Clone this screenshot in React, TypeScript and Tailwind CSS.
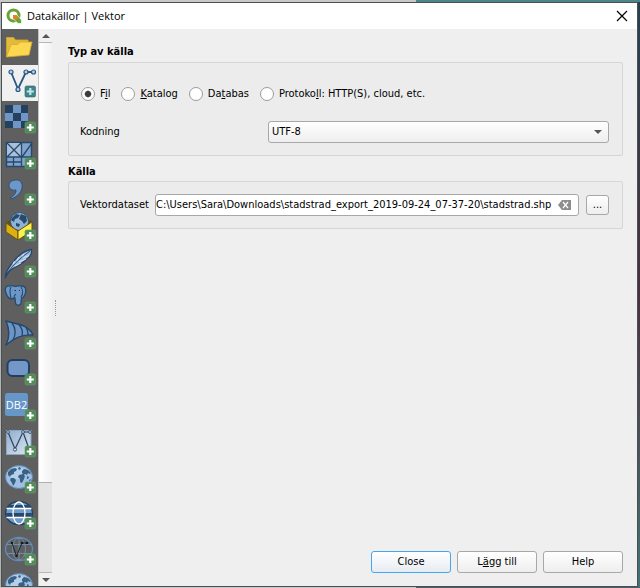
import type { ReactNode } from "react";
import { clsx } from "clsx";

function Badge({ teal = false }: { teal?: boolean }) {
  return (
    <g>
      <rect x="23" y="21" width="10.5" height="11" rx="1.5" fill={teal ? "#3f8487" : "#508c57"} stroke={teal ? "#2c6470" : "#6a9a6e"} strokeWidth="0.6" />
      <path d="M28.3 23v7M24.8 26.500h7" stroke={teal ? "#bfe6ea" : "#fff"} strokeWidth="2.2" />
    </g>
  );
}

function Globe() {
  return (
    <>
      <ellipse cx="17" cy="16" rx="13.500" ry="11.500" fill="#9fc0e3" stroke="#5b88b5" />
      <ellipse cx="15" cy="12" rx="9" ry="6" fill="#c3daf0" opacity="0.6" />
      <path
        d="M6 11l3-3 4-1 2 1-1 2-2 1v2l-3 1-1 2-2-2zM9 17l3 0 2 2-1 3-2 3-1-3-2-3zM16 7l2-1 1 2-2 1zM20 10l2-2 4 1 3 3-1 1-2-1-1 2-2-1-1 1-2-2zM17 14l4-1 2 2-1 3-2 4-2-1 0-3-2-2zM25 15l2 1-1 2-1 0zM27 19l2-1-1 3z"
        fill="#3a6083"
      />
    </>
  );
}

const sources: { name: string; icon: ReactNode }[] = [
  {
    name: "Bläddrare",
    icon: (
      <g stroke="#d6a92b" strokeWidth="0.8" strokeLinejoin="round">
        <path d="M4.500 27.500V8.500h7l2 2.500h12.500v4z" fill="#e3ba3c" />
        <path d="M4.500 28L9 15.500h7l2-2.500h12L27 26z" fill="#fbd850" />
      </g>
    ),
  },
  {
    name: "Vektor",
    icon: (
      <>
        <path d="M9 7l7 17L24 7h8" fill="none" stroke="#2b5780" strokeWidth="1.800" />
        <g fill="#b7d1ea" stroke="#2b5780" strokeWidth="1.200">
          <circle cx="9" cy="7" r="2" />
          <circle cx="24" cy="7" r="2" />
          <circle cx="31.500" cy="7" r="2" />
          <circle cx="16" cy="24.500" r="2" />
        </g>
        <Badge teal />
      </>
    ),
  },
  {
    name: "Raster",
    icon: (
      <>
        <rect x="3" y="4" width="23" height="23" fill="#25405f" />
        <path d="M11 4h8v8h7v8h-7v7h-8v-7H3v-8h8z" fill="#6e97c8" />
        <rect x="11" y="12" width="8" height="8" fill="#25405f" />
        <Badge />
      </>
    ),
  },
  {
    name: "Mesh",
    icon: (
      <>
        <rect x="4.500" y="5.500" width="25" height="24" fill="#7fa3cd" stroke="#29496b" strokeWidth="1.500" />
        <path d="M5 6h14v14H5z" fill="#a9c0dc" />
        <path d="M4 20h26M19.500 5v25M11.500 20v10M4 25h16M5 6l14 14M19 6L5 20M30 6L20 20" fill="none" stroke="#29496b" strokeWidth="1.300" />
        <Badge />
      </>
    ),
  },
  {
    name: "Avgränsad text",
    icon: (
      <>
        <path d="M13 7c5-1 8 3 7 8-1 5-5 9-11 11l-1-1c4-2 6-5 6-8-4 1-7-1-7-4.500C7 9.500 9.500 7.500 13 7z" fill="#6d97c7" stroke="#294f7a" strokeWidth="1" />
        <Badge />
      </>
    ),
  },
  {
    name: "GeoPackage",
    icon: (
      <>
        <path d="M4 13l13-5 13 4-14 9z" fill="#675000" />
        <circle cx="17.500" cy="12.500" r="9" fill="#8fb2d8" stroke="#31587f" />
        <path d="M10 9l4-4 4 1-2 3-3 1-1 3-3-2zM19 5l5 2 1 5-3 3-2-3-3-2zM14 14l4 1-1 3-3-1z" fill="#284b6c" />
        <path d="M4 14l12 8v9L4 23z" fill="#dcb014" stroke="#695006" />
        <path d="M16 22l14-9v9l-14 9z" fill="#fff04a" stroke="#695006" />
        <Badge />
      </>
    ),
  },
  {
    name: "SpatiaLite",
    icon: (
      <>
        <path d="M3.500 32c0-5 2-8 6-13C15 11 22 6 29.500 4.500c.500 4-1 7-4 9-3 3-6 5-10 7.500-4 2-6 3-8 5z" fill="#9dbadb" stroke="#24466a" strokeWidth="1.300" />
        <path d="M3.500 31C8 23 17 14 28 6" fill="none" stroke="#24466a" strokeWidth="0.900" />
        <path d="M11 19l1.500-3M15 15.500l2-3.500M20 11.500l2-3M13 21l6-3M17 17l7-3M21 13l6-2.500" fill="none" stroke="#e3edf7" strokeWidth="0.900" />
        <Badge />
      </>
    ),
  },
  {
    name: "PostgreSQL",
    icon: (
      <>
        <path d="M8 5c2-1 4 0 5 .500 2-1 5-.500 7-.500 3 0 4.500 3 3.500 7-1 3-2 5-4 5l-.500 5c-.500 3-5 3-5.500 0L13 17l-4 1C5 17 2 9 4 6c1-1 2-1.500 4-1z" fill="#6b96c6" stroke="#274a70" strokeWidth="1.300" />
        <path d="M9 6c-2 4-1 7 0 11M19 6c2 3 2 7 0 10M12 17c0-2 0-3 2-4" fill="none" stroke="#274a70" strokeWidth="1.100" />
        <path d="M12.500 9.500h1.500M17 9.500h1" stroke="#1b3552" strokeWidth="1.200" />
        <Badge />
      </>
    ),
  },
  {
    name: "MSSQL",
    icon: (
      <>
        <path d="M4 4c9 3 22 3 27 14-10-1-19 3-27 10 4-8 4-15 0-24z" fill="#6c95c5" stroke="#24466a" strokeWidth="1.400" strokeLinejoin="round" />
        <path d="M10 6c4 5 4 12 1 17M17 8c4 4 4 7 3 11M24 11c2 2 2 4 2 7" fill="none" stroke="#24466a" strokeWidth="1.300" />
        <Badge />
      </>
    ),
  },
  {
    name: "Oracle",
    icon: (
      <>
        <rect x="5.500" y="7" width="21.500" height="16" rx="5" fill="#7398c8" stroke="#223f62" strokeWidth="2" />
        <Badge />
      </>
    ),
  },
  {
    name: "DB2",
    icon: (
      <>
        <rect x="3" y="4" width="23" height="23" rx="2.500" fill="#6796c8" />
        <text x="14.500" y="20" textAnchor="middle" fontSize="11" fill="#fff" className="font-['Open_Sans',sans-serif]">
          DB2
        </text>
        <Badge />
      </>
    ),
  },
  {
    name: "Virtuellt lager",
    icon: (
      <>
        <defs>
          <linearGradient id="layer" x1="0" y1="0" x2="1" y2="1">
            <stop offset="0" stopColor="#8fadcd" />
            <stop offset="1" stopColor="#dde7f1" />
          </linearGradient>
        </defs>
        <rect x="4.500" y="5.500" width="24.500" height="24" fill="url(#layer)" stroke="#8aa6c3" />
        <path d="M6 7l7 17 8-17h7M21 7l5 14" fill="none" stroke="#2b4460" strokeWidth="1.200" />
        <g fill="#dce8f4" stroke="#2b4460" strokeWidth="0.900">
          <circle cx="6" cy="7" r="1.400" />
          <circle cx="21" cy="7" r="1.400" />
          <circle cx="28" cy="7" r="1.400" />
          <circle cx="13" cy="24.500" r="1.600" />
        </g>
        <Badge />
      </>
    ),
  },
  {
    name: "WMS/WMTS",
    icon: (
      <>
        <Globe />
        <Badge />
      </>
    ),
  },
  {
    name: "WCS",
    icon: (
      <>
        <ellipse cx="17" cy="16" rx="13.500" ry="11.500" fill="#6f9bcd" stroke="#22405f" strokeWidth="1.400" />
        <path d="M7 8h20l2 3H5zM4 16h26l-1 5H5z" fill="#27496c" />
        <path d="M4.500 11.500h25M4.500 20.500h25" stroke="#fff" strokeWidth="1.300" />
        <ellipse cx="17" cy="16" rx="6" ry="11" fill="none" stroke="#fff" strokeWidth="1.300" />
        <Badge />
      </>
    ),
  },
  {
    name: "WFS",
    icon: (
      <>
        <ellipse cx="17" cy="16" rx="13.500" ry="11.500" fill="none" stroke="#5d8cc0" strokeWidth="1.300" />
        <g fill="none" stroke="#7591ae" strokeWidth="0.900">
          <ellipse cx="17" cy="16" rx="6.500" ry="11" />
          <path d="M5 11.500h24M5 20.500h24M17 5v22" />
        </g>
        <path d="M10 10l4.500 13L20 10h5" fill="none" stroke="#1a2633" strokeWidth="1" />
        <path d="M9 9h2v2H9zM19 9h2v2h-2zM24 9h2v2h-2zM13.500 22h2v2h-2z" fill="#101820" />
        <Badge />
      </>
    ),
  },
  {
    name: "ArcGIS",
    icon: <Globe />,
  },
];

const sourceTypes = [
  { id: "file", label: <>F<u>i</u>l</> },
  { id: "folder", label: <><u>K</u>atalog</> },
  { id: "database", label: <>Da<u>t</u>abas</> },
  { id: "protocol", label: <>Protoko<u>l</u>l: HTTP(S), cloud, etc.</> },
];

const buttonStyle = "h-[22px] w-20 rounded-[3px] border bg-linear-to-b from-white";

function TitleBar() {
  return (
    <header className="flex h-[26px] shrink-0 items-center bg-white pr-[7px] pl-1 font-['Open_Sans','Noto_Sans',sans-serif]">
      <svg viewBox="0 0 16 16" className="mr-[5px] size-4">
        <circle cx="7.500" cy="7.500" r="5.500" fill="none" stroke="#67a436" strokeWidth="3" />
        <path d="M7 7h4l4.500 5v3.500h-3.500L7 10.500z" fill="#67a436" stroke="#fff" strokeWidth="0.700" />
        <path d="M7 7h3.500l2 2.500-2.500 2.500-3-2z" fill="#ee7d2d" />
      </svg>
      <h1 className="flex-1">Datakällor | Vektor</h1>
      <button aria-label="Stäng" className="p-0.5">
        <svg viewBox="0 0 12 12" className="size-3">
          <path d="M1 1l10 10M11 1L1 11" stroke="#000" strokeWidth="1.200" />
        </svg>
      </button>
    </header>
  );
}

function SourceList() {
  return (
    <nav className="w-9 shrink-0 overflow-hidden bg-[#5f5f5f]">
      {sources.map((source) => (
        <button
          key={source.name}
          aria-label={source.name}
          className={clsx("block size-9", source.name === "Vektor" && "bg-[#f0f0f0]")}
        >
          <svg viewBox="0 0 36 36" className="size-9">
            {source.icon}
          </svg>
        </button>
      ))}
    </nav>
  );
}

function ScrollBar() {
  return (
    <div className="flex w-[14px] shrink-0 flex-col border-l border-[#c4c4c4] bg-[#e4e4e4]">
      <button aria-label="Rulla upp" className="flex h-[14px] shrink-0 items-center justify-center border-b border-[#b8b8b8] bg-[#f0f0f0]">
        <svg viewBox="0 0 8 4" className="h-1 w-2">
          <path d="M0 4l4-4 4 4z" fill="#555" />
        </svg>
      </button>
      <div className="flex-441 border-b border-[#b0b0b0] bg-linear-to-r from-white to-[#f2f2f2]" />
      <div className="flex-89" />
      <button aria-label="Rulla ned" className="flex h-[14px] shrink-0 items-center justify-center border-t border-[#b8b8b8] bg-[#f0f0f0]">
        <svg viewBox="0 0 8 4" className="h-1 w-2">
          <path d="M0 0l4 4 4-4z" fill="#555" />
        </svg>
      </button>
    </div>
  );
}

export default function App() {
  return (
    <div className="flex h-screen flex-col bg-linear-to-b from-[#26414f] via-[#4a3040] to-[#3f7476]">
      <div className="h-0.5 shrink-0 bg-linear-to-r from-[#c8c8c8] from-65% to-[#4d8689] to-65%" />
      <div className="mr-0.5 flex min-h-0 flex-1 border-l border-[#b4b4b4]">
        <div className="flex min-w-0 flex-1 flex-col border border-[#4a4f52] bg-[#efefef] font-['DejaVu_Sans_Condensed','Noto_Sans',sans-serif] text-[11px] leading-4 text-black">
          <TitleBar />
          <div className="flex min-h-0 flex-1">
            <SourceList />
            <ScrollBar />
            <div className="flex w-1 shrink-0 items-center justify-end">
              <div className="h-4 w-px border-l border-dotted border-[#999]" />
            </div>
            <main className="flex min-w-0 flex-1 flex-col pt-[15px] pr-[14px] pb-[13px] pl-3">
              <h2 className="font-bold">Typ av källa</h2>
              <section className="mt-0.5 rounded-[2px] border border-[#d6d6d6] bg-[#ececec] pt-[23px] pr-[13px] pb-3 pl-[11px]">
                <div className="flex gap-[11px] pl-px">
                  {sourceTypes.map((type) => (
                    <label key={type.id} className="flex items-center gap-[5px] whitespace-nowrap">
                      <input
                        type="radio"
                        name="source-type"
                        defaultChecked={type.id === "file"}
                        className="size-[14px] appearance-none rounded-full border border-[#9b9b9b] bg-white checked:bg-radial checked:from-[#3c3c3c] checked:from-30% checked:to-white checked:to-45%"
                      />
                      <span>{type.label}</span>
                    </label>
                  ))}
                </div>
                <div className="mt-[19px] flex items-center">
                  <label htmlFor="encoding" className="w-[188px] shrink-0">
                    Kodning
                  </label>
                  <div className="relative flex-1">
                    <select id="encoding" className="h-[22px] w-full appearance-none rounded-[3px] border border-[#a8a8a8] bg-linear-to-b from-white to-[#eeeeee] pl-[3px]">
                      <option>UTF-8</option>
                    </select>
                    <svg viewBox="0 0 8 4" className="pointer-events-none absolute top-[9px] right-[7px] h-1 w-2">
                      <path d="M0 0h8L4 4z" fill="#555" />
                    </svg>
                  </div>
                </div>
              </section>
              <h2 className="mt-2 font-bold">Källa</h2>
              <section className="mt-px flex items-center rounded-[2px] border border-[#d6d6d6] bg-[#ececec] py-3 pr-[13px] pl-[11px]">
                <label htmlFor="dataset" className="w-[75px] shrink-0">
                  Vektordataset
                </label>
                <div className="flex h-[22px] min-w-0 flex-1 items-center rounded-[3px] border border-[#a8a8a8] bg-white pr-[7px]">
                  <input
                    id="dataset"
                    className="min-w-0 flex-1 outline-none"
                    defaultValue="C:\Users\Sara\Downloads\stadstrad_export_2019-09-24_07-37-20\stadstrad.shp"
                  />
                  <button aria-label="Rensa" className="ml-1">
                    <svg viewBox="0 0 13 10" className="h-[10px] w-[13px]">
                      <path d="M0 5l4-5h9v10H4z" fill="#8d8d8d" />
                      <path d="M5 2l5 6M10 2L5 8" stroke="#fff" strokeWidth="1.200" />
                    </svg>
                  </button>
                </div>
                <button aria-label="Bläddra" className="ml-[7px] h-5 w-[23px] rounded-[3px] border border-[#a8a8a8] bg-linear-to-b from-white to-[#eeeeee]">
                  ...
                </button>
              </section>
              <footer className="mt-auto flex justify-end gap-1.5">
                <button className={clsx(buttonStyle, "border-[#45a6f0] to-[#e6ecf2]")}>Close</button>
                <button className={clsx(buttonStyle, "border-[#a8a8a8] to-[#eeeeee]")}>
                  L<u>ä</u>gg till
                </button>
                <button className={clsx(buttonStyle, "border-[#a8a8a8] to-[#eeeeee]")}>Help</button>
              </footer>
            </main>
          </div>
        </div>
      </div>
      <div className="h-px shrink-0 bg-linear-to-r from-[#c8c8c8] from-65% to-[#4d5f6d] to-65%" />
    </div>
  );
}
